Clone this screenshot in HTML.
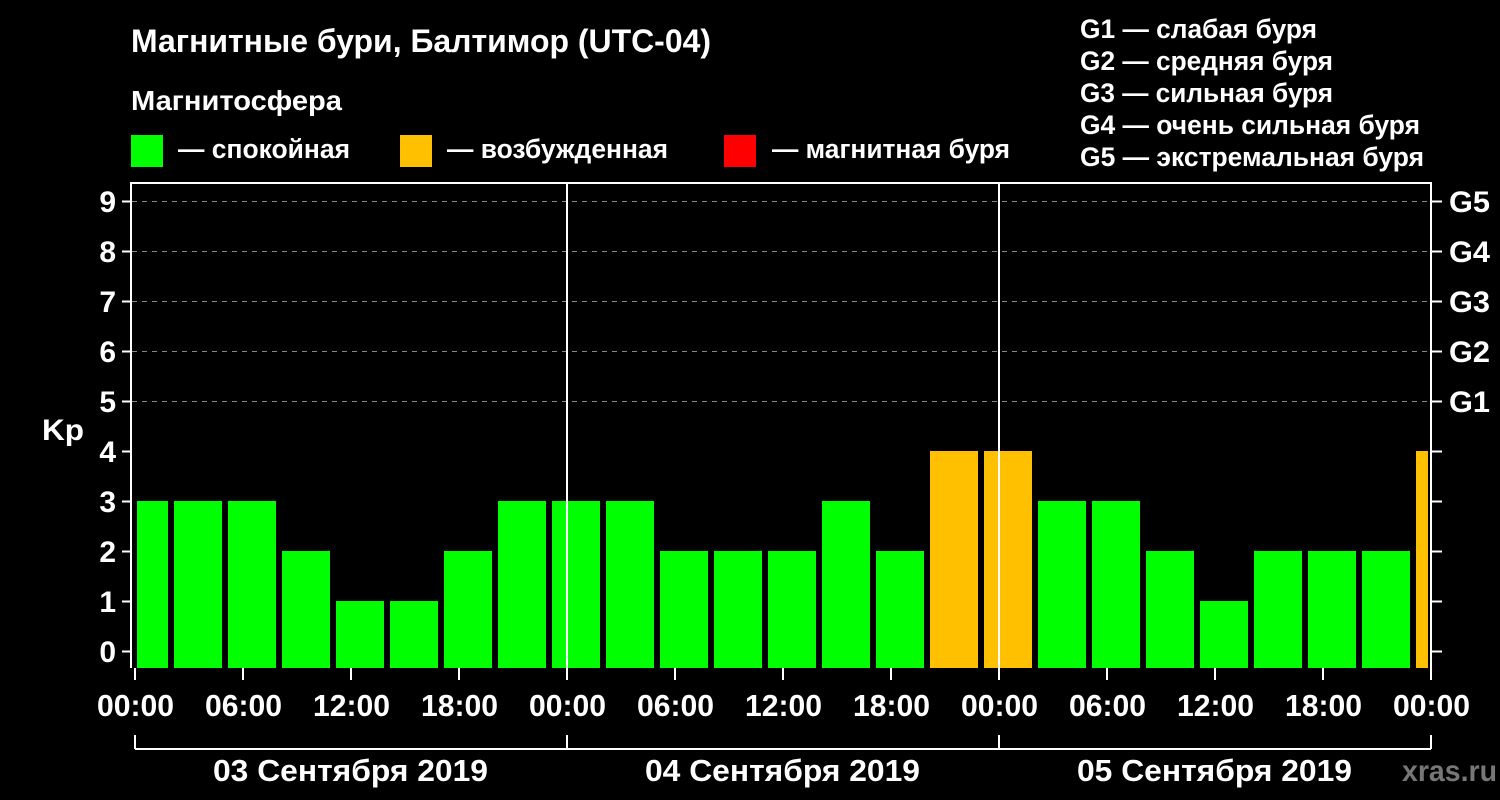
<!DOCTYPE html>
<html><head><meta charset="utf-8"><style>
html,body{margin:0;padding:0;background:#000;}
svg{display:block;font-family:"Liberation Sans",sans-serif;font-weight:bold;}
</style></head><body>
<svg width="1500" height="800" viewBox="0 0 1500 800">
<rect width="1500" height="800" fill="#000"/>
<g fill="#fff" font-size="30" lengthAdjust="spacingAndGlyphs">
<text x="131" y="52" font-size="32" textLength="580" lengthAdjust="spacingAndGlyphs">Магнитные бури, Балтимор (UTC-04)</text>
<text x="131" y="110" font-size="28" textLength="211" lengthAdjust="spacingAndGlyphs">Магнитосфера</text>
<text x="178" y="158" font-size="27" textLength="172" lengthAdjust="spacingAndGlyphs">— спокойная</text>
<text x="447" y="158" font-size="27" textLength="221" lengthAdjust="spacingAndGlyphs">— возбужденная</text>
<text x="772" y="158" font-size="27" textLength="238" lengthAdjust="spacingAndGlyphs">— магнитная буря</text>
<text x="1080" y="38" font-size="27" textLength="237" lengthAdjust="spacingAndGlyphs">G1 — слабая буря</text>
<text x="1080" y="70" font-size="27" textLength="253" lengthAdjust="spacingAndGlyphs">G2 — средняя буря</text>
<text x="1080" y="102" font-size="27" textLength="253" lengthAdjust="spacingAndGlyphs">G3 — сильная буря</text>
<text x="1080" y="134" font-size="27" textLength="340" lengthAdjust="spacingAndGlyphs">G4 — очень сильная буря</text>
<text x="1080" y="166" font-size="27" textLength="344" lengthAdjust="spacingAndGlyphs">G5 — экстремальная буря</text>
</g>
<rect x="131" y="135" width="32" height="32" fill="#00ff00"/>
<rect x="400" y="135" width="32" height="32" fill="#ffc000"/>
<rect x="724" y="135" width="32" height="32" fill="#ff0000"/>
<g stroke="#888" stroke-dasharray="5,5" stroke-width="1">
<line x1="132" y1="201.5" x2="1431" y2="201.5"/>
<line x1="132" y1="251.5" x2="1431" y2="251.5"/>
<line x1="132" y1="301.5" x2="1431" y2="301.5"/>
<line x1="132" y1="351.5" x2="1431" y2="351.5"/>
<line x1="132" y1="401.5" x2="1431" y2="401.5"/>
</g>
<g fill="#00ff00">
<rect x="137" y="501" width="31" height="167"/>
<rect x="174" y="501" width="48" height="167"/>
<rect x="228" y="501" width="48" height="167"/>
<rect x="282" y="551" width="48" height="117"/>
<rect x="336" y="601" width="48" height="67"/>
<rect x="390" y="601" width="48" height="67"/>
<rect x="444" y="551" width="48" height="117"/>
<rect x="498" y="501" width="48" height="167"/>
<rect x="552" y="501" width="48" height="167"/>
<rect x="606" y="501" width="48" height="167"/>
<rect x="660" y="551" width="48" height="117"/>
<rect x="714" y="551" width="48" height="117"/>
<rect x="768" y="551" width="48" height="117"/>
<rect x="822" y="501" width="48" height="167"/>
<rect x="876" y="551" width="48" height="117"/>
<rect x="1038" y="501" width="48" height="167"/>
<rect x="1092" y="501" width="48" height="167"/>
<rect x="1146" y="551" width="48" height="117"/>
<rect x="1200" y="601" width="48" height="67"/>
<rect x="1254" y="551" width="48" height="117"/>
<rect x="1308" y="551" width="48" height="117"/>
<rect x="1362" y="551" width="48" height="117"/>
</g>
<g fill="#ffc000">
<rect x="930" y="451" width="48" height="217"/>
<rect x="984" y="451" width="48" height="217"/>
<rect x="1416" y="451" width="12" height="217"/>
</g>
<g stroke="#fff" stroke-width="2" fill="none">
<polyline points="131,668 131,183 1431,183 1431,668"/>
<line x1="567" y1="183" x2="567" y2="668"/>
<line x1="999" y1="183" x2="999" y2="668"/>
<path d="M122 201.5h9M122 251.5h9M122 301.5h9M122 351.5h9M122 401.5h9M122 451.5h9M122 501.5h9M122 551.5h9M122 601.5h9M122 651.5h9"/>
<path d="M1431 201.5h11M1431 251.5h11M1431 301.5h11M1431 351.5h11M1431 401.5h11M1431 451.5h11M1431 501.5h11M1431 551.5h11M1431 601.5h11M1431 651.5h11"/>
<path d="M135 668v12M243 668v12M351 668v12M459 668v12M567 668v12M675 668v12M783 668v12M891 668v12M999 668v12M1107 668v12M1215 668v12M1323 668v12M1431 668v12"/>
<path d="M135 735v14M567 735v14M999 735v14M1431 735v14M135 749H1431"/>
</g>
<g fill="#fff" font-size="30" text-anchor="end">
<text x="116" y="212">9</text><text x="116" y="262">8</text><text x="116" y="312">7</text>
<text x="116" y="362">6</text><text x="116" y="412">5</text><text x="116" y="462">4</text>
<text x="116" y="512">3</text><text x="116" y="562">2</text><text x="116" y="612">1</text>
<text x="116" y="662">0</text>
</g>
<text x="42" y="440" fill="#fff" font-size="30" textLength="42" lengthAdjust="spacingAndGlyphs">Kp</text>
<g fill="#fff" font-size="30">
<text x="1449" y="212" textLength="41" lengthAdjust="spacingAndGlyphs">G5</text>
<text x="1449" y="262" textLength="41" lengthAdjust="spacingAndGlyphs">G4</text>
<text x="1449" y="312" textLength="41" lengthAdjust="spacingAndGlyphs">G3</text>
<text x="1449" y="362" textLength="41" lengthAdjust="spacingAndGlyphs">G2</text>
<text x="1449" y="412" textLength="41" lengthAdjust="spacingAndGlyphs">G1</text>
</g>
<g fill="#fff" font-size="31">
<text x="97" y="716" textLength="77" lengthAdjust="spacingAndGlyphs">00:00</text>
<text x="205" y="716" textLength="77" lengthAdjust="spacingAndGlyphs">06:00</text>
<text x="313" y="716" textLength="77" lengthAdjust="spacingAndGlyphs">12:00</text>
<text x="421" y="716" textLength="77" lengthAdjust="spacingAndGlyphs">18:00</text>
<text x="529" y="716" textLength="77" lengthAdjust="spacingAndGlyphs">00:00</text>
<text x="637" y="716" textLength="77" lengthAdjust="spacingAndGlyphs">06:00</text>
<text x="745" y="716" textLength="77" lengthAdjust="spacingAndGlyphs">12:00</text>
<text x="853" y="716" textLength="77" lengthAdjust="spacingAndGlyphs">18:00</text>
<text x="961" y="716" textLength="77" lengthAdjust="spacingAndGlyphs">00:00</text>
<text x="1069" y="716" textLength="77" lengthAdjust="spacingAndGlyphs">06:00</text>
<text x="1177" y="716" textLength="77" lengthAdjust="spacingAndGlyphs">12:00</text>
<text x="1285" y="716" textLength="77" lengthAdjust="spacingAndGlyphs">18:00</text>
<text x="1393" y="716" textLength="77" lengthAdjust="spacingAndGlyphs">00:00</text>
<text x="213" y="781" textLength="275" lengthAdjust="spacingAndGlyphs">03 Сентября 2019</text>
<text x="645" y="781" textLength="275" lengthAdjust="spacingAndGlyphs">04 Сентября 2019</text>
<text x="1077" y="781" textLength="275" lengthAdjust="spacingAndGlyphs">05 Сентября 2019</text>
</g>
<text x="1402" y="781" fill="#777" font-size="30" textLength="95" lengthAdjust="spacingAndGlyphs">xras.ru</text>
</svg>
</body></html>
